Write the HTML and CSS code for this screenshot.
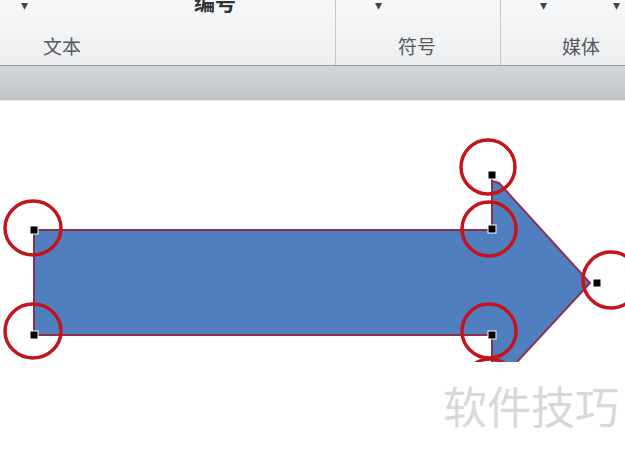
FILE: index.html
```html
<!DOCTYPE html>
<html lang="zh">
<head>
  <meta charset="UTF-8" />
  <title>箭头形状</title>
  <link rel="stylesheet" href="styles.css">
</head>
<body>

  <div class="ribbon">
    <div class="group g-text">
      <div class="top">
        <span class="drop d1">▾</span>
        <span class="cut">编号</span>
      </div>
      <div class="label">文本</div>
    </div>
    <div class="group g-symbol">
      <div class="top">
        <span class="drop d2">▾</span>
      </div>
      <div class="label">符号</div>
    </div>
    <div class="group g-media">
      <div class="top">
        <span class="drop d3">▾</span>
        <span class="drop d4">▾</span>
      </div>
      <div class="label">媒体</div>
    </div>
  </div>
  <div class="bar"></div>

  <div class="canvas">
    <svg width="625" height="261" viewBox="0 101 625 261">
      <!-- arrow shape -->
      <polygon class="arrow" points="34,230 492,230 492,181 499,183 590,283 492,389 492,335 34,335" />
      <line class="edit" x1="492" y1="175" x2="492" y2="230" />
      <line class="edit" x1="492" y1="335" x2="492" y2="362" />

      <!-- handles -->
      <rect class="handle" x="30" y="226" width="8" height="8" />
      <rect class="handle" x="30" y="331" width="8" height="8" />
      <rect class="handle" x="488" y="171" width="8" height="8" />
      <rect class="handle" x="488" y="225" width="8" height="8" />
      <rect class="handle" x="488" y="331" width="8" height="8" />
      <rect class="handle" x="593" y="279" width="8" height="8" />

      <!-- red marks -->
      <ellipse class="mark" cx="33" cy="228" rx="28" ry="27" />
      <ellipse class="mark" cx="33" cy="331" rx="28" ry="27" />
      <ellipse class="mark" cx="488" cy="167" rx="27" ry="27" />
      <ellipse class="mark" cx="489" cy="229" rx="27" ry="27" />
      <ellipse class="mark" cx="489" cy="331" rx="27" ry="27" />
      <ellipse class="mark" cx="611" cy="280" rx="28" ry="28" />
      <ellipse class="mark" cx="490" cy="386" rx="27" ry="27" />
    </svg>
  </div>

  <div class="foot">
    <span class="watermark">软件技巧</span>
  </div>

</body>
</html>
```

FILE: styles.css
```css
body{margin:0;background:#fff;font-family:"Noto Sans CJK SC","Noto Sans",sans-serif;width:625px;height:456px;overflow:hidden;}
.ribbon{display:flex;height:65px;background:linear-gradient(#f7f8f9,#eceef0);border-bottom:1px solid #9a9ea3;}
.group{position:relative;display:flex;flex-direction:column;justify-content:space-between;border-right:1px solid #c4c7cb;}
.g-text{width:335px;}
.g-symbol{width:164px;}
.g-media{flex:1;border-right:none;}
.top{position:relative;height:14px;}
.drop{position:absolute;top:-6px;font-size:14px;color:#444;}
.d1{left:21px;}
.d2{left:39px;}
.d3{left:39px;}
.d4{left:112px;}
.cut{position:absolute;left:194px;top:-14px;font-size:21px;font-weight:bold;color:#333;}
.label{font-size:19px;line-height:24px;color:#555a61;padding-bottom:7px;}
.g-text .label{padding-left:43px;}
.g-symbol .label{padding-left:62px;}
.g-media .label{padding-left:61px;}
.bar{height:34px;background:linear-gradient(#d3d6d9,#c1c4c8);border-bottom:1px solid #e4e6e8;}
.canvas{height:261px;overflow:hidden;}
.canvas svg{display:block;}
.arrow{fill:#4f7fbf;stroke:#8a3152;stroke-width:2;}
.edit{stroke:#8a3152;stroke-width:2;}
.handle{fill:#000;stroke:#fff;stroke-width:1;}
.mark{fill:none;stroke:#c4141c;stroke-width:3.5;}
.foot{display:flex;justify-content:flex-end;padding:17px 6px 0 0;}
.watermark{font-size:44px;line-height:52px;color:#d8d8d8;}
```
